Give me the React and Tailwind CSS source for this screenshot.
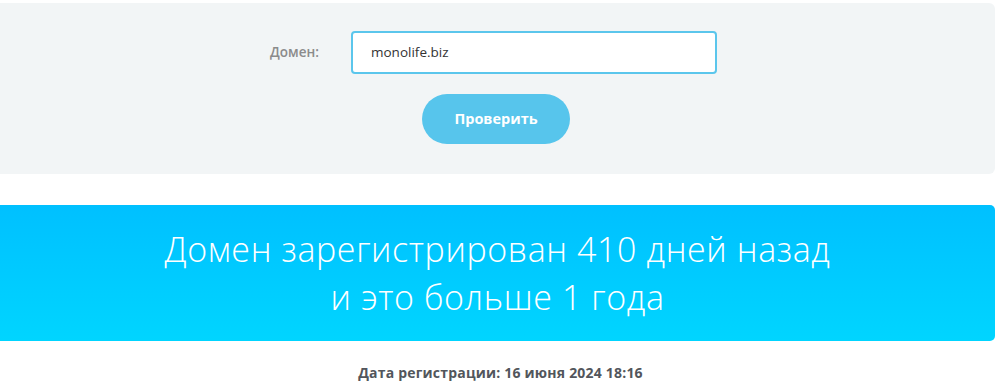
export default function App() {
  return (
    <div className="w-[1001px] h-[392px] bg-white" style={{ fontFamily: '"Open Sans", "Liberation Sans", sans-serif' }}>
      <div className="pt-[3px] pr-[6px]">
        <div className="h-[171px] bg-[#f2f5f6] rounded-r-[6px] flex flex-col items-center pt-[28px]">
          <div className="flex items-center mr-[8px]">
            <label className="w-[81px] text-[13.5px] font-semibold text-[#8b8b8b]">
              Домен:
            </label>
            <div className="w-[366px] h-[43px] bg-white border-2 border-[#5bc6ec] rounded-[4px] flex items-center pl-[18px] text-[13.5px] text-[#333]">
              monolife.biz
            </div>
          </div>
          <button className="mt-[20px] mr-[3px] w-[148px] h-[50px] rounded-full bg-[#57c5ec] text-white text-[14.5px] font-bold">
            Проверить
          </button>
        </div>
      </div>
      <div className="mt-[31px] mr-[6px] h-[136px] rounded-r-[5px] bg-gradient-to-b from-[#00c0ff] to-[#00d5ff] flex flex-col items-center justify-center text-white text-[34px] tracking-[0.6px] font-light leading-[48px]">
        <div>Домен зарегистрирован 410 дней назад</div>
        <div>и это больше 1 года</div>
      </div>
      <div className="pt-[21px] text-center text-[14px] tracking-[0.2px] font-bold text-[#52565c]">
        Дата регистрации: 16 июня 2024 18:16
      </div>
    </div>
  );
}
